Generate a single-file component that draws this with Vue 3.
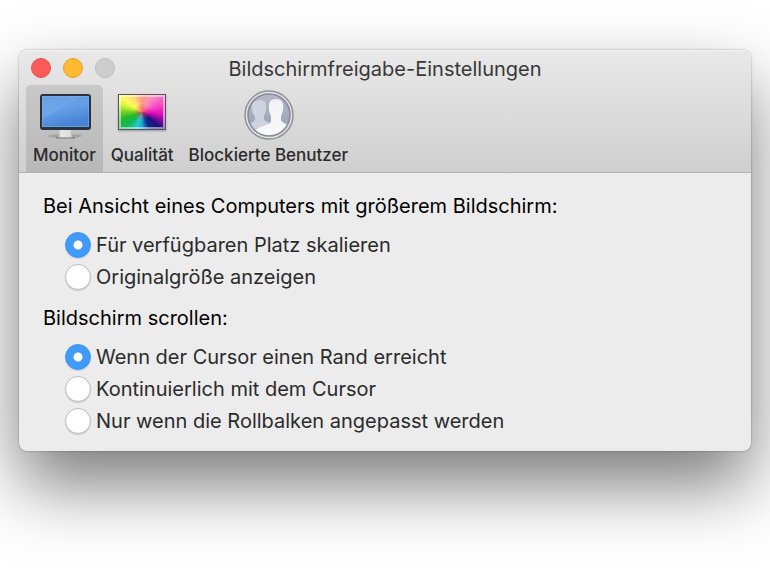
<script setup>
import { ref } from 'vue'

const activeTab = ref('monitor')
const tabs = [
  { id: 'monitor', label: 'Monitor' },
  { id: 'quality', label: 'Qualität' },
  { id: 'blocked', label: 'Blockierte Benutzer' }
]

const scaling = ref('fit')
const scrolling = ref('edge')
const scalingOptions = [
  { value: 'fit', label: 'Für verfügbaren Platz skalieren' },
  { value: 'original', label: 'Originalgröße anzeigen' }
]
const scrollingOptions = [
  { value: 'edge', label: 'Wenn der Cursor einen Rand erreicht' },
  { value: 'continuous', label: 'Kontinuierlich mit dem Cursor' },
  { value: 'scrollbars', label: 'Nur wenn die Rollbalken angepasst werden' }
]
</script>

<template>
  <div class="desktop">
    <main class="window">
      <header class="chrome">
        <div class="titlebar">
          <div class="lights">
            <button class="light close" type="button" aria-label="Schließen"></button>
            <button class="light minimize" type="button" aria-label="Minimieren"></button>
            <button class="light zoom" type="button" aria-label="Zoomen" disabled></button>
          </div>
          <h1 class="title">Bildschirmfreigabe-Einstellungen</h1>
        </div>
        <nav class="toolbar">
          <button
            v-for="tab in tabs"
            :key="tab.id"
            type="button"
            class="tab"
            :class="{ active: activeTab === tab.id }"
            @click="activeTab = tab.id"
          >
            <svg v-if="tab.id === 'monitor'" class="icon" width="56" height="54" viewBox="0 0 56 54" aria-hidden="true">
              <defs>
                <linearGradient id="screen" x1="0" y1="0" x2="0.4" y2="1">
                  <stop offset="0" stop-color="#5b9ae4" />
                  <stop offset="0.5" stop-color="#659fe8" />
                  <stop offset="1" stop-color="#4584d4" />
                </linearGradient>
                <linearGradient id="stand" x1="0" y1="0" x2="1" y2="0">
                  <stop offset="0" stop-color="#777" />
                  <stop offset="0.25" stop-color="#e8e8e8" />
                  <stop offset="0.75" stop-color="#dcdcdc" />
                  <stop offset="1" stop-color="#777" />
                </linearGradient>
              </defs>
              <ellipse cx="29" cy="48" rx="17" ry="2" fill="#000" opacity="0.14" />
              <path d="M23 41h13v5l3 4H20l3-4z" fill="url(#stand)" />
              <path d="M20 50h19" stroke="#777" stroke-width="1" />
              <rect x="4" y="6" width="51" height="36" rx="3" fill="#2b323c" />
              <rect x="6" y="8" width="47" height="31" fill="url(#screen)" />
              <path d="M6 8h40L6 31z" fill="#fff" opacity="0.07" />
              <rect x="6.500" y="8.500" width="46" height="30" fill="none" stroke="#76afec" opacity="0.6" />
            </svg>

            <span v-else-if="tab.id === 'quality'" class="icon spectrum" aria-hidden="true"></span>

            <svg v-else class="icon" width="54" height="54" viewBox="0 0 54 54" aria-hidden="true">
              <defs>
                <clipPath id="disc"><circle cx="28" cy="27" r="21" /></clipPath>
                <linearGradient id="back" x1="0" y1="0" x2="0" y2="1">
                  <stop offset="0" stop-color="#b4b8c8" />
                  <stop offset="1" stop-color="#989eb4" />
                </linearGradient>
                <linearGradient id="front" x1="0" y1="0" x2="0" y2="1">
                  <stop offset="0" stop-color="#f1f2f6" />
                  <stop offset="1" stop-color="#fafafa" />
                </linearGradient>
              </defs>
              <circle cx="28" cy="27" r="24" fill="#e3e3e5" stroke="#929294" stroke-width="1.500" />
              <circle cx="28" cy="27" r="21" fill="url(#back)" />
              <g clip-path="url(#disc)">
                <path d="M19 12c5 0 7 4 6 9 0 3-1 5-2 7v4l5 3v16H2V38c5-2 10-3 12-6v-4c-2-2-3-4-3-7-1-5 2-9 8-9z" fill="#cfd3df" />
                <path d="M35 11c6 0 8 4 7 10 0 3-1 5-2 7v4c1 3 6 4 10 7v14H15V42c4-5 14-4 15-9v-5c-1-2-2-4-2-7-1-6 1-10 7-10z" fill="url(#front)" />
              </g>
              <circle cx="28" cy="27" r="21" fill="none" stroke="#858a9c" stroke-width="1.500" />
            </svg>
            <span class="tab-label">{{ tab.label }}</span>
          </button>
        </nav>
      </header>

      <form class="content" @submit.prevent>
        <fieldset class="group">
          <legend class="legend">Bei Ansicht eines Computers mit größerem Bildschirm:</legend>
          <div class="options">
            <label v-for="option in scalingOptions" :key="option.value" class="option">
              <input v-model="scaling" class="radio" type="radio" name="scaling" :value="option.value" />
              <span>{{ option.label }}</span>
            </label>
          </div>
        </fieldset>
        <fieldset class="group">
          <legend class="legend">Bildschirm scrollen:</legend>
          <div class="options">
            <label v-for="option in scrollingOptions" :key="option.value" class="option">
              <input v-model="scrolling" class="radio" type="radio" name="scrolling" :value="option.value" />
              <span>{{ option.label }}</span>
            </label>
          </div>
        </fieldset>
      </form>
    </main>
  </div>
</template>

<style>
body {
  margin: 0;
  background: #fff;
}
</style>

<style scoped>
.desktop {
  box-sizing: border-box;
  min-height: 100vh;
  padding: 50px 19px 126px;
  overflow: hidden;
  font-family: Inter, Roboto, "Liberation Sans", sans-serif;
  color: #2b2b2b;
}

.window {
  border-radius: 8px;
  background: #ececec;
  box-shadow:
    0 0 2px rgba(0, 0, 0, 0.4),
    0 34px 70px rgba(0, 0, 0, 0.52);
}

.chrome {
  border-bottom: 1px solid #b3b3b3;
  border-radius: 8px 8px 0 0;
  background: linear-gradient(#e9e9e9, #cfcfcf);
  box-shadow: inset 0 1px 0 #f4f4f4;
}

.titlebar {
  display: grid;
  grid-template-columns: 1fr auto 1fr;
  align-items: center;
  height: 35px;
  padding: 0 12px;
}

.lights {
  display: flex;
  gap: 12px;
}

.light {
  box-sizing: border-box;
  width: 20px;
  height: 20px;
  padding: 0;
  border: 1px solid;
  border-radius: 50%;
}

.close {
  border-color: #e5504b;
  background: #fc5b57;
}

.minimize {
  border-color: #e2a333;
  background: #fdb92f;
}

.zoom {
  border-color: #bcbcbc;
  background: #cdcdcd;
}

.title {
  margin: 0;
  padding-top: 2px;
  font-size: 20px;
  font-weight: 400;
  line-height: 24px;
  color: #383838;
}

.toolbar {
  display: flex;
  gap: 1px;
  padding: 0 7px;
}

.tab {
  display: flex;
  flex-direction: column;
  align-items: center;
  height: 87px;
  padding: 3px 7px 0;
  border: 0;
  border-radius: 5px 5px 0 0;
  background: none;
  font: inherit;
  color: #2b2b2b;
}

.tab.active {
  background: rgba(0, 0, 0, 0.11);
}

.icon {
  display: block;
  flex: none;
}

.spectrum {
  box-sizing: border-box;
  width: 48px;
  height: 36px;
  margin: 6px 0 12px;
  border: 1px solid #55555b;
  background:
    radial-gradient(circle at 50% 50%, rgba(240, 70, 80, 0.7), rgba(255, 70, 60, 0) 30%),
    conic-gradient(
      from 0deg at 50% 50%,
      #ff9a82 0deg,
      #ff8cc0 35deg,
      #f84fc8 65deg,
      #e010b8 95deg,
      #8a0aa0 112deg,
      #20107c 130deg,
      #0c2c90 155deg,
      #20a0d8 180deg,
      #20ccc8 200deg,
      #14b860 225deg,
      #20b828 250deg,
      #78d428 272deg,
      #d8f440 290deg,
      #fcfa58 305deg,
      #ffd878 332deg,
      #ff9a82 360deg
    );
  box-shadow: inset 0 0 0 2px rgba(255, 255, 255, 0.5), 0 1px 2px rgba(0, 0, 0, 0.3);
}

.tab-label {
  padding-top: 1px;
  font-size: 17px;
  font-weight: 500;
  line-height: 24px;
  white-space: nowrap;
}

.content {
  display: flex;
  flex-direction: column;
  gap: 11px;
  padding: 19px 24px 14px;
}

.group {
  min-width: 0;
  margin: 0;
  padding: 0;
  border: 0;
}

.legend {
  padding: 0;
  font-size: 20px;
  font-weight: 400;
  line-height: 28px;
  color: #000;
}

.options {
  padding: 9px 0 0 22px;
}

.option {
  display: flex;
  align-items: center;
  gap: 5px;
  height: 32px;
  font-size: 20px;
  line-height: 28px;
}

.radio {
  appearance: none;
  box-sizing: border-box;
  flex: none;
  width: 26px;
  height: 26px;
  margin: 0;
  border: 1px solid #bdbdbd;
  border-radius: 50%;
  background: #fff;
  box-shadow: 0 1px 1px rgba(0, 0, 0, 0.12);
}

.radio:checked {
  border-color: #3b93f5;
  background: radial-gradient(circle, #fff 4px, #409af8 5px);
}
</style>
